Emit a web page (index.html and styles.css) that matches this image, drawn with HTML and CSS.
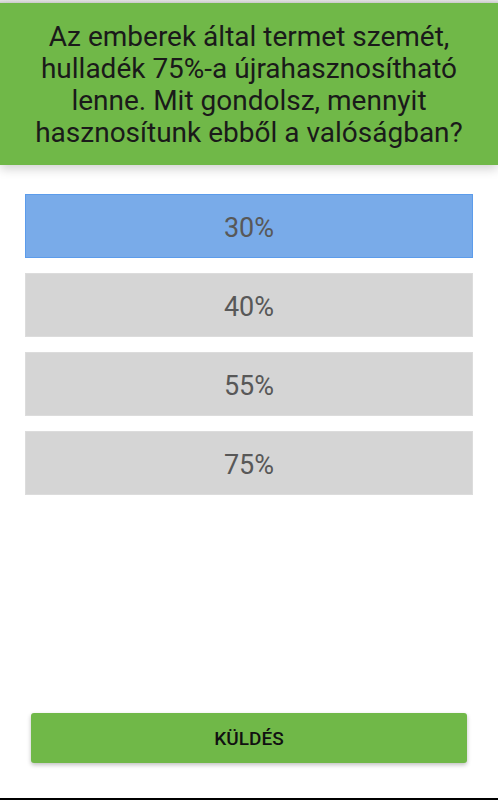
FILE: index.html
```html
<!DOCTYPE html>
<html lang="hu">
<head>
<meta charset="utf-8">
<title>Kvíz</title>
<link rel="stylesheet" href="styles.css">
</head>
<body>
<div class="app">
  <div class="topbar"></div>
  <header class="question">
    <h1>Az emberek által termet szemét, hulladék 75%-a újrahasznosítható lenne. Mit gondolsz, mennyit hasznosítunk ebből a valóságban?</h1>
  </header>
  <main class="options">
    <div class="option selected">30%</div>
    <div class="option">40%</div>
    <div class="option">55%</div>
    <div class="option">75%</div>
  </main>
  <div class="actions">
    <button class="send">Küldés</button>
  </div>
  <div class="bottombar"></div>
</div>
</body>
</html>
```
FILE: styles.css
```css
html, body {
  margin: 0;
  padding: 0;
  background: #ffffff;
}
body {
  font-family: Roboto, "Noto Sans", sans-serif;
}
.app {
  display: flex;
  flex-direction: column;
  height: 800px;
}
.topbar {
  height: 3px;
  background: linear-gradient(#e6e6e6, #d2d2d2);
}
.question {
  background: #70b848;
  height: 162px;
  box-sizing: border-box;
  padding: 18px 20px 0;
  box-shadow: 0 4px 10px rgba(0, 0, 0, 0.18);
  position: relative;
  z-index: 1;
}
.question h1 {
  margin: 0;
  font-weight: 400;
  font-size: 28px;
  line-height: 32px;
  text-align: center;
  color: #1a1a1a;
}
.options {
  display: flex;
  flex-direction: column;
  gap: 15px;
  padding: 29px 25px 0;
}
.option {
  height: 64px;
  box-sizing: border-box;
  padding-top: 3px;
  display: flex;
  align-items: center;
  justify-content: center;
  background: #d5d5d5;
  border: 1px solid #dcdcdc;
  color: #585858;
  font-size: 27px;
}
.option.selected {
  background: #79abe9;
  border-color: #5c9ceb;
}
.actions {
  margin-top: auto;
  padding: 0 31px 35px;
}
.send {
  display: block;
  width: 100%;
  height: 50px;
  border: none;
  border-radius: 3px;
  background: #70b848;
  color: #111111;
  font-family: Roboto, "Noto Sans", sans-serif;
  font-size: 19px;
  font-weight: 500;
  text-transform: uppercase;
  box-shadow: 0 2px 4px rgba(0, 0, 0, 0.25);
}
.bottombar {
  height: 2px;
  background: #000000;
}
```
